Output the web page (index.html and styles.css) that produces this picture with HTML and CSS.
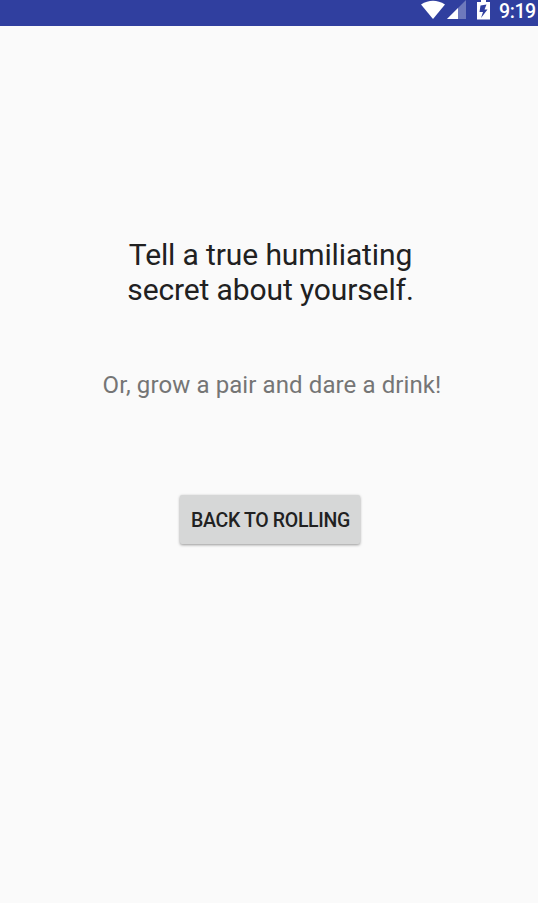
FILE: index.html
```html
<!DOCTYPE html>
<html lang="en">
<head>
<meta charset="utf-8">
<title>Truth</title>
<link rel="stylesheet" href="styles.css">
</head>
<body>
<header class="status-bar">
<svg class="wifi" viewBox="0 0 24 19"><path d="M0 4.500Q12-3 24 4.500L12 19Z"/></svg>
<svg class="signal" viewBox="0 0 19 19"><path class="dim" d="M19 0V19H0Z"/><path d="M11 8V19H0Z"/></svg>
<svg class="battery" viewBox="0 0 13 20"><path fill-rule="evenodd" d="M4 0H9V2H13V19.500H0V2H4ZM9.500 4.500L3.500 5.500L2.500 12H6L4 18L10.500 9.500H7.500Z"/></svg>
<span class="clock">9:19</span>
</header>
<main class="content">
<h1 class="title">Tell a true humiliating<br>secret about yourself.</h1>
<p class="subtitle">Or, grow a pair and dare a drink!</p>
<button class="button">BACK TO ROLLING</button>
</main>
</body>
</html>
```

FILE: styles.css
```css
body {
  margin: 0;
  height: 903px;
  overflow: hidden;
  background: #fafafa;
  font-family: Roboto, sans-serif;
}

.status-bar {
  display: flex;
  box-sizing: border-box;
  height: 26px;
  padding-left: 421px;
  background: #303f9f;
  color: #fff;
}

.status-bar svg {
  flex: none;
  height: 19px;
  fill: #fff;
}

.wifi { width: 24px; }
.signal { width: 19px; margin-left: 2px; }
.signal .dim { opacity: .3; }
.status-bar .battery { width: 13px; height: 20px; margin-left: 11px; }

.clock {
  margin-left: 9px;
  font-size: 19.5px;
  font-weight: 500;
  letter-spacing: -.4px;
  line-height: 23px;
}

.content {
  display: flex;
  flex-direction: column;
  align-items: center;
  padding: 211px 0 0 3px;
}

.title {
  margin: 0;
  color: #212121;
  font-size: 30px;
  font-weight: 400;
  letter-spacing: -.12px;
  line-height: 35px;
  text-align: center;
}

.subtitle {
  margin: 63px 0 0 3px;
  color: #757575;
  font-size: 24px;
  letter-spacing: .1px;
  line-height: 30px;
}

.button {
  width: 180px;
  height: 49px;
  margin: 95px 1px 0 0;
  padding: 2px 0 0 1px;
  border: 0;
  border-radius: 2px;
  background: #d6d7d7;
  box-shadow: 0 1px 3px rgba(0, 0, 0, .4);
  color: #212121;
  font: 500 19.5px Roboto, sans-serif;
  letter-spacing: -.33px;
}
```
